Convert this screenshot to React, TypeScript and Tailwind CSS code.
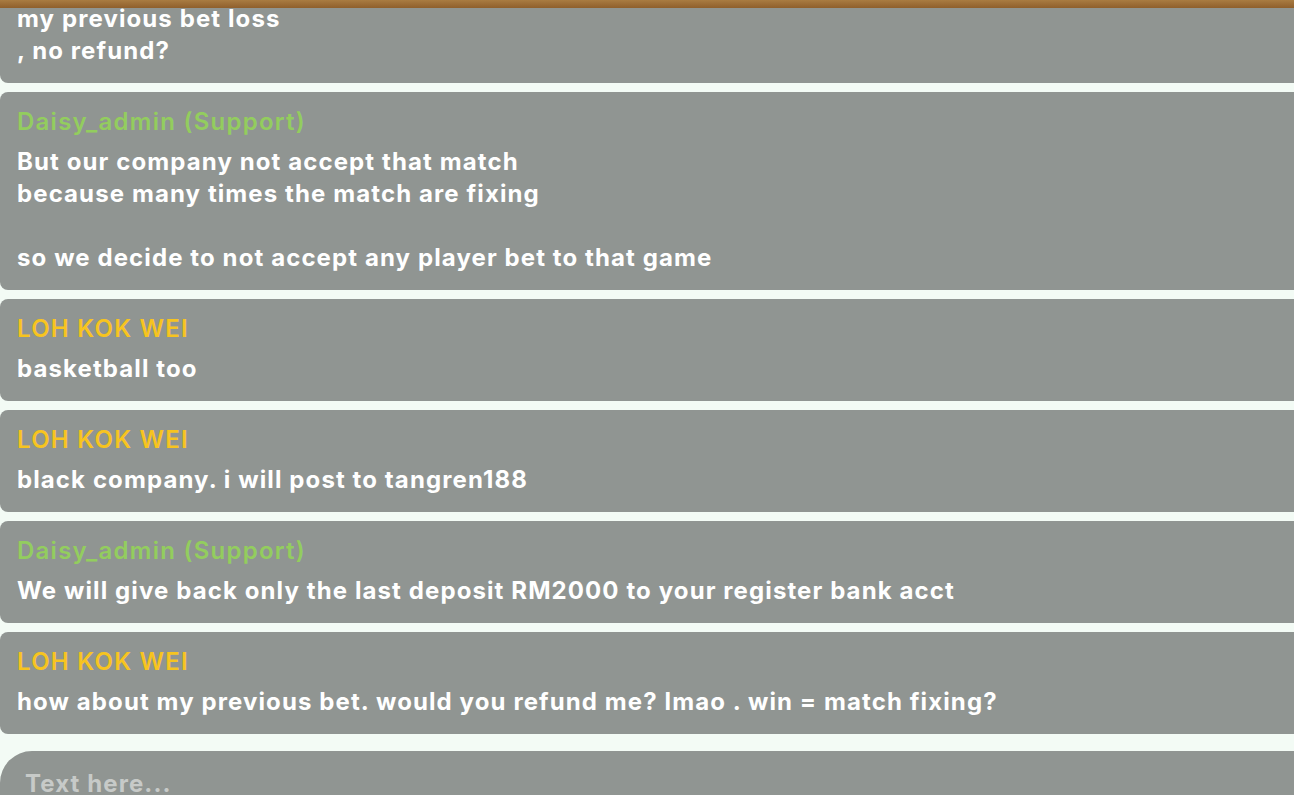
import React from 'react';

type Msg = { name: string; support?: boolean; lines: string[] };

const messages: Msg[] = [
  {
    name: 'Daisy_admin (Support)',
    support: true,
    lines: ['But our company not accept that match', 'because many times the match are fixing', '', 'so we decide to not accept any player bet to that game'],
  },
  { name: 'LOH KOK WEI', lines: ['basketball too'] },
  { name: 'LOH KOK WEI', lines: ['black company. i will post to tangren188'] },
  { name: 'Daisy_admin (Support)', support: true, lines: ['We will give back only the last deposit RM2000 to your register bank acct'] },
  { name: 'LOH KOK WEI', lines: ['how about my previous bet. would you refund me? lmao . win = match fixing?'] },
];

function Bubble({ msg }: { msg: Msg }) {
  return (
    <div className="rounded-l-lg bg-[#909592] pl-[17px] pt-[14px] pb-4">
      <div className={`text-[24px] leading-8 font-semibold tracking-[1.25px] ${msg.support ? 'text-[#93cd5e]' : 'text-[#f7c41f]'}`}>{msg.name}</div>
      <div className="mt-2 text-[24px] leading-8 font-bold tracking-[1.1px] text-white">
        {msg.lines.map((l, i) => (
          <div key={i} className="h-8 whitespace-pre">{l}</div>
        ))}
      </div>
    </div>
  );
}

export default function App() {
  return (
    <div className="relative h-[795px] w-[1294px] overflow-hidden bg-[#f3fbf5]" style={{ fontFamily: 'Inter, "Noto Sans", sans-serif' }}>
      {/* header bar sitting over the scrolled chat */}
      <div className="absolute top-0 left-0 right-0 z-10 h-2 bg-gradient-to-b from-[#a97c42] to-[#8f5f2c]" />

      <div className="-mt-[51px] flex flex-col gap-[9px] -mr-4">
        <div className="rounded-l-lg bg-[#909592] pl-[17px] pt-[14px] pb-4">
          <div className="text-[24px] leading-8 font-semibold tracking-[1.25px] text-[#f7c41f]">LOH KOK WEI</div>
          <div className="mt-2 text-[24px] leading-8 font-bold tracking-[1.1px] text-white">
            <div>my previous bet loss</div>
            <div>, no refund?</div>
          </div>
        </div>
        {messages.map((m, i) => (
          <Bubble key={i} msg={m} />
        ))}
        <div className="mt-2 h-20 rounded-l-[32px] bg-[#909592] pl-[25px] pt-[15px]">
          <input
            placeholder="Text here..."
            className="w-full bg-transparent text-[24px] font-bold tracking-[1.1px] text-white outline-none placeholder:text-[#c7cac8]"
          />
        </div>
      </div>
    </div>
  );
}
